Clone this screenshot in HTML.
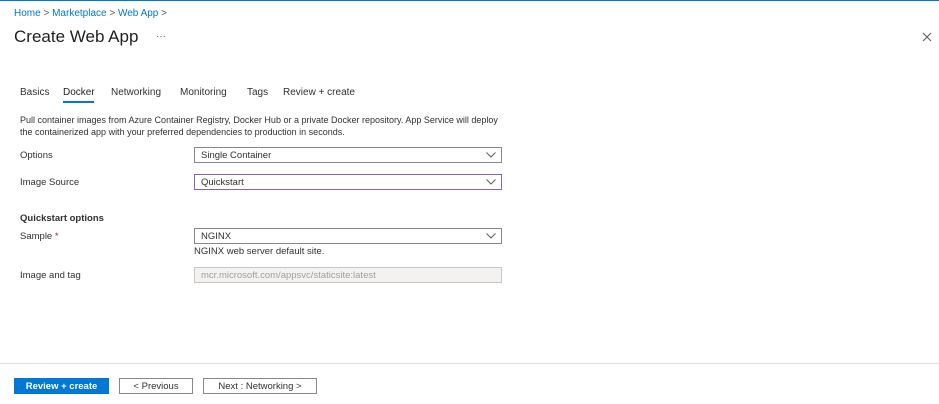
<!DOCTYPE html>
<html><head><style>
*{margin:0;padding:0;box-sizing:border-box}
body{width:939px;height:404px;background:#fff;font-family:"Liberation Sans",sans-serif;color:#323130;position:relative;overflow:hidden;font-size:10px}
.a{position:absolute;white-space:nowrap}
.top{position:absolute;left:0;top:0;width:939px;height:1px;background:#0078d4}
.bc{color:#0078d4;font-size:10px}
.sel{position:absolute;left:194px;width:308px;height:16px;border:1px solid #8a8886;font-size:9.5px;padding-left:6px;line-height:16px}
.sel svg{position:absolute;right:5px;top:4px}
.btn{position:absolute;top:378px;height:16px;border:1px solid #8a8886;font-size:9.5px;text-align:center;line-height:15px}
</style></head><body>
<div class="top"></div>
<div class="a bc" style="left:14px;top:8px">Home<span style="color:#605e5c">&nbsp;&gt;&nbsp;</span>Marketplace<span style="color:#605e5c">&nbsp;&gt;&nbsp;</span>Web App<span style="color:#605e5c">&nbsp;&gt;</span></div>
<div class="a" style="left:14px;top:27px;font-size:17px;color:#201f1e">Create Web App</div>
<div class="a" style="left:156px;top:31px;font-size:10px;color:#605e5c">···</div>
<svg class="a" style="left:922px;top:32px" width="10" height="10"><path d="M1 1L9 9M9 1L1 9" stroke="#605e5c" stroke-width="1.1"/></svg>
<div class="a" style="left:20px;top:87px;font-size:10px">Basics</div>
<div class="a" style="left:63px;top:87px;font-size:10px;color:#201f1e">Docker</div>
<div class="a" style="left:63px;top:101px;width:31px;height:2px;background:#0078d4"></div>
<div class="a" style="left:111px;top:87px;font-size:10px">Networking</div>
<div class="a" style="left:180px;top:87px;font-size:10px">Monitoring</div>
<div class="a" style="left:247px;top:87px;font-size:10px">Tags</div>
<div class="a" style="left:283px;top:87px;font-size:10px">Review + create</div>
<div class="a" style="left:20px;top:114px;font-size:9px;line-height:12px">Pull container images from Azure Container Registry, Docker Hub or a private Docker repository. App Service will deploy<br>the containerized app with your preferred dependencies to production in seconds.</div>
<div class="a" style="left:20px;top:150px;font-size:9.5px">Options</div>
<div class="sel" style="top:147px">Single Container<svg width="10" height="6"><path d="M0.5 0.5L5 5L9.5 0.5" fill="none" stroke="#605e5c"/></svg></div>
<div class="a" style="left:20px;top:177px;font-size:9.5px">Image Source</div>
<div class="sel" style="top:174px;border-color:#8764b8">Quickstart<svg width="10" height="6"><path d="M0.5 0.5L5 5L9.5 0.5" fill="none" stroke="#605e5c"/></svg></div>
<div class="a" style="left:20px;top:213px;font-size:9.5px;font-weight:bold">Quickstart options</div>
<div class="a" style="left:20px;top:231px;font-size:9.5px">Sample <span style="color:#a4262c">*</span></div>
<div class="sel" style="top:228px">NGINX<svg width="10" height="6"><path d="M0.5 0.5L5 5L9.5 0.5" fill="none" stroke="#605e5c"/></svg></div>
<div class="a" style="left:194px;top:246px;font-size:9.5px">NGINX web server default site.</div>
<div class="a" style="left:20px;top:270px;font-size:9.5px">Image and tag</div>
<div class="sel" style="top:267px;background:#f3f2f1;border-color:#c8c6c4;color:#a19f9d">mcr.microsoft.com/appsvc/staticsite:latest</div>
<div class="a" style="left:0;top:363px;width:939px;height:1px;background:#e1dfdd"></div>
<div class="btn" style="left:14px;width:95px;background:#0078d4;border-color:#0078d4;color:#fff;font-weight:bold">Review + create</div>
<div class="btn" style="left:119px;width:74px">&lt; Previous</div>
<div class="btn" style="left:203px;width:114px">Next : Networking &gt;</div>
</body></html>
